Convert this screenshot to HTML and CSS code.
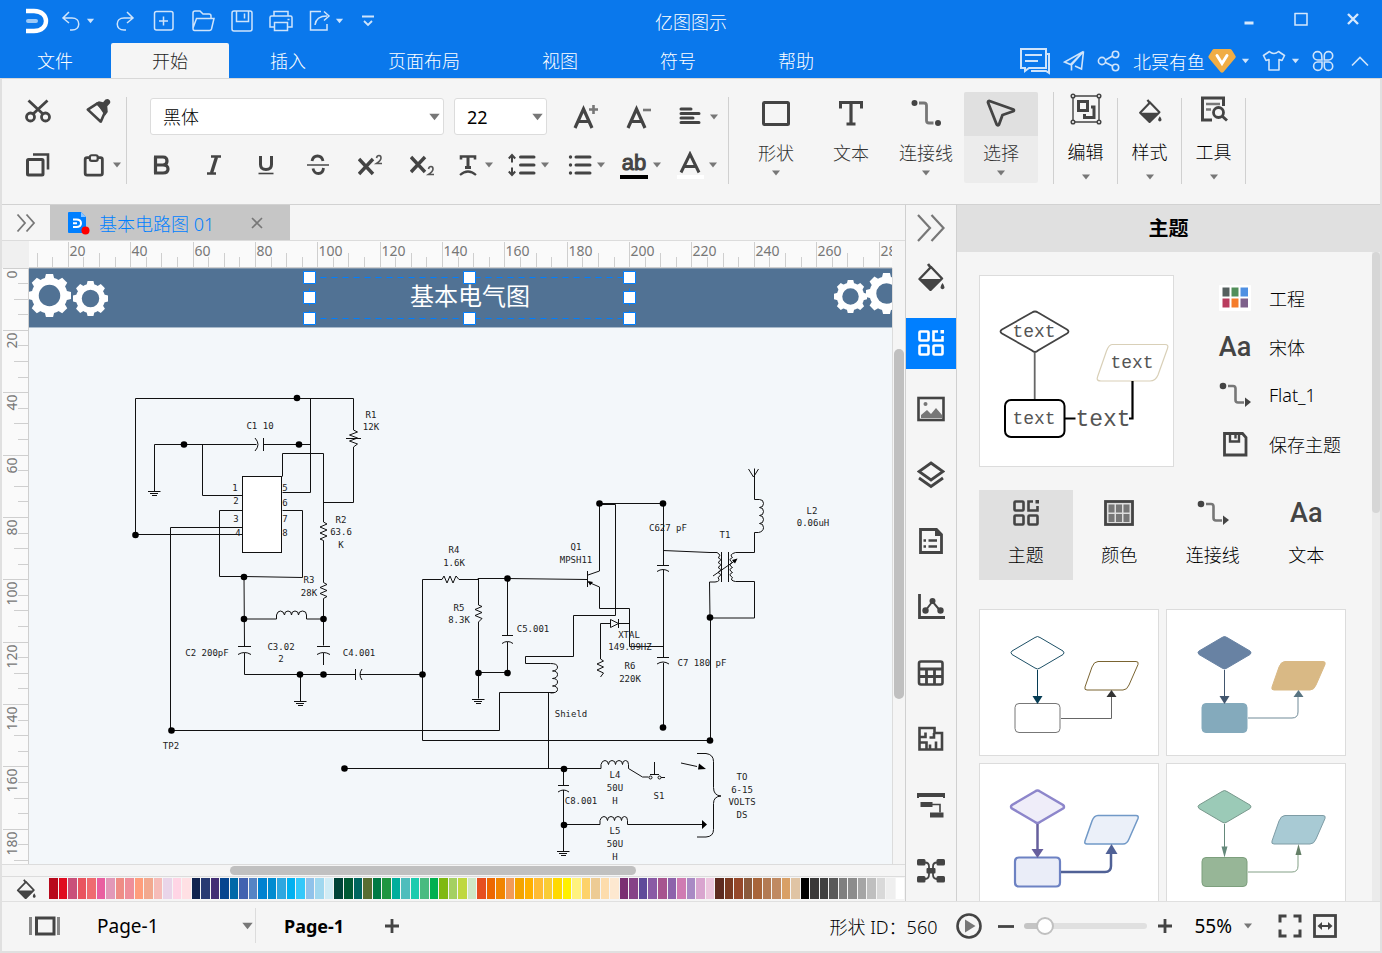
FILE: index.html
```html
<!DOCTYPE html>
<html lang="zh-CN">
<head>
<meta charset="utf-8">
<meta name="viewport" content="width=device-width, initial-scale=1">
<title>亿图图示</title>
<link rel="stylesheet" href="styles.css">
</head>
<body>
<svg class="defs" aria-hidden="true">
  <symbol id="caret" viewBox="0 0 10 6"><path d="M1 0.500h8L5 5.500z" fill="currentColor"/></symbol>
  <symbol id="bucket" viewBox="0 0 28 28"><path d="M11 1l3 4" stroke="currentColor" stroke-width="2.600" fill="none"/><path d="M14 4L2.500 16 13.500 27 25 15.500z" fill="none" stroke="currentColor" stroke-width="2.400" stroke-linejoin="round"/><path d="M2.500 16h22.500L13.500 27.500z" fill="currentColor"/><path d="M25.500 20q3 4 1.500 5.500t-3 0 1.500-5.500z" fill="currentColor"/></symbol>
  <symbol id="tiles" viewBox="0 0 26 26"><g fill="none" stroke="currentColor" stroke-width="2.600"><rect x="1.500" y="1.500" width="9" height="9" rx="1"/><path d="M20 1.500h-4.500v9h9V6"/><rect x="1.500" y="15.500" width="9" height="9" rx="1"/><rect x="15.500" y="15.500" width="9" height="9" rx="1"/></g><path d="M22.500 0H26v3.500h-3.500z" fill="currentColor"/></symbol>
  <symbol id="route" viewBox="0 0 32 26"><circle cx="4" cy="4" r="3.300" fill="#444"/><path d="M9 4h5q2.500 0 2.500 2.500v11.500q0 2.500 2.500 2.500h6" fill="none" stroke="#777" stroke-width="2.600"/><path d="M26 15.500l6 4.500-6 5z" fill="#444"/></symbol>
  <symbol id="gear" viewBox="-21 -21 42 42"><circle r="14" fill="none" stroke="#fff" stroke-width="7"/><g fill="#fff"><path id="tooth" d="M-5-15l1.500-6h7l1.500 6z"/><use href="#tooth" transform="rotate(45)"/><use href="#tooth" transform="rotate(90)"/><use href="#tooth" transform="rotate(135)"/><use href="#tooth" transform="rotate(180)"/><use href="#tooth" transform="rotate(225)"/><use href="#tooth" transform="rotate(270)"/><use href="#tooth" transform="rotate(315)"/></g></symbol>
</svg>

<div class="app">
<header class="top">
  <div class="titlebar">
    <div class="quick">
      <svg class="logo" viewBox="0 0 26 26"><path d="M2 3h8c16 0 16 20 0 20H2" fill="none" stroke="#fff" stroke-width="4.400"/><path d="M4 13h8" stroke="#9cc9f7" stroke-width="4" stroke-linecap="round"/></svg>
      <div class="quick-pair"><button class="qb" aria-label="撤销"><svg viewBox="0 0 24 24"><path d="M10 3L4 9l6 5M4 9h9c9 0 9 12 0 12h-2"/></svg></button><button class="qc" aria-label="撤销列表"><svg><use href="#caret"/></svg></button></div>
      <button class="qb" aria-label="重做"><svg viewBox="0 0 24 24"><path d="M14 3l6 6-6 5M20 9h-9c-9 0-9 12 0 12h2"/></svg></button>
      <button class="qb" aria-label="新建"><svg viewBox="0 0 24 24"><rect x="2.500" y="2.500" width="18.500" height="18.500" rx="2"/><path d="M11.500 7.500v9M7 12h9"/></svg></button>
      <button class="qb" aria-label="打开"><svg viewBox="0 0 24 24"><path d="M2 19V4q0-2 2-2h5l3 3h6q2 0 2 2v2M2 19L5.500 9.500H23L20.500 20q-.5 1.500-2 1.500H3.500Q2 21.500 2 19z"/></svg></button>
      <button class="qb" aria-label="保存"><svg viewBox="0 0 24 24"><path d="M4 2h16q2 0 2 2v16q0 2-2 2H4q-2 0-2-2V4q0-2 2-2zM6.500 2v10.500h12V2M14.500 4.500v5"/></svg></button>
      <button class="qb" aria-label="打印"><svg viewBox="0 0 24 24"><path d="M5 7V2.500h14V7M5 18H1V8.500Q1 7 2.500 7h19Q23 7 23 8.500V18h-4M5.500 13.500h13v8h-13zM18.500 10.500h2"/></svg></button>
      <div class="quick-pair"><button class="qb" aria-label="导出"><svg viewBox="0 0 24 24"><path d="M13 2.500H2.500v18.500H19v-6M7 16q1-9 12-9M16 2.500l5 4.500-5 4.500"/></svg></button><button class="qc" aria-label="导出列表"><svg><use href="#caret"/></svg></button></div>
      <button class="qm" aria-label="更多"><svg viewBox="0 0 12 12"><path d="M0 1.500h12M2 6l4 4 4-4"/></svg></button>
    </div>
    <h1>亿图图示</h1>
    <div class="winctl">
      <button aria-label="最小化"><svg viewBox="0 0 16 16"><path d="M3.500 12h9" stroke-width="3"/></svg></button>
      <button aria-label="最大化"><svg viewBox="0 0 16 16"><path d="M2 2v12h12V2M1.500 2.500h13"/></svg></button>
      <button aria-label="关闭"><svg viewBox="0 0 16 16"><path d="M3 3l10 10M13 3L3 13" stroke-width="2.400"/></svg></button>
    </div>
  </div>
  <div class="menubar">
    <nav class="tabs">
      <a href="#" class="first">文件</a><a href="#" class="on">开始</a><a href="#">插入</a><a href="#">页面布局</a><a href="#">视图</a><a href="#">符号</a><a href="#">帮助</a>
    </nav>
    <div class="account">
      <button aria-label="消息"><svg width="32" height="28" viewBox="0 0 32 28"><path d="M2 2h25v19H10l-4 3v-3H2zM27 7h3v19l-3-2H12M6 8h17M6 14h13" stroke-width="2"/></svg></button>
      <button aria-label="发送"><svg width="22" height="22" viewBox="0 0 22 22"><path d="M20.500 1.500L1.500 12l6 2.500zM20.500 1.500L8.500 15v5.500M20.500 1.500L18.500 19l-6.500-3"/></svg></button>
      <button aria-label="分享"><svg width="24" height="22" viewBox="0 0 24 22"><circle cx="5" cy="11" r="3.600"/><circle cx="18.500" cy="4.500" r="3.200"/><circle cx="18.500" cy="17.500" r="3.200"/><path d="M8.500 10l7-4M8.500 12.500l7 3.500"/></svg></button>
      <button class="user"><span>北冥有鱼</span><svg width="28" height="26" viewBox="0 0 28 26"><path d="M6 1h16q1 0 1.800 1L27.500 8q.6 1-.2 2L15.500 24q-1.500 1.500-3 0L.8 10Q0 9 .6 8L4.400 2Q5 1 6 1z" fill="#f0ad45" stroke="none"/><path d="M9 7.500l5 8 5-8" stroke="#fff" stroke-width="3" stroke-linecap="round"/></svg></button>
      <button class="ac" aria-label="账户"><svg><use href="#caret"/></svg></button>
      <button aria-label="皮肤"><svg width="24" height="22" viewBox="0 0 24 22"><path d="M7.500 1.500q4.500 4 9 0l6 4-2.500 5-3-1v10.500H7V9.500l-3 1L1.500 5.500z" stroke-linejoin="round"/></svg></button>
      <button class="ac" aria-label="皮肤列表"><svg><use href="#caret"/></svg></button>
      <button aria-label="应用"><svg width="22" height="22" viewBox="0 0 22 22"><path d="M10 10H5.500a4.200 4.200 0 1 1 4.200-4.200zM12.300 10V5.800A4.200 4.200 0 1 1 16.500 10zM10 12v4.200A4.200 4.200 0 1 1 5.500 12zM12.300 12h4.200a4.200 4.200 0 1 1-4.200 4.200z"/></svg></button>
      <button class="collapse" aria-label="折叠"><svg width="20" height="12" viewBox="0 0 20 12"><path d="M2 10.500l8-8 8 8"/></svg></button>
    </div>
  </div>
</header>

<section class="ribbon">
  <div class="clip">
    <div class="clip-row top-row">
      <button aria-label="剪切"><svg viewBox="0 0 26 26"><g fill="none" stroke="#444" stroke-width="2.800"><circle cx="5.500" cy="19" r="4"/><circle cx="20.500" cy="19" r="4"/><path d="M3.500 2.500L18 16M22.500 2.500L8 16"/></g></svg></button>
      <button aria-label="格式刷"><svg viewBox="0 0 28 28"><path d="M3 12.500L13 6l9 8-5 11.500z" fill="none" stroke="#444" stroke-width="2.800" stroke-linejoin="round"/><path d="M12 5l3-1.500 4.500 1L22 1.600q2.500-1.500 4.300.5t.2 4L24 9l.5 6-3 4z" fill="#444"/></svg></button>
    </div>
    <div class="clip-row">
      <button aria-label="复制"><svg viewBox="0 0 26 26"><g fill="none" stroke="#444"><rect x="2.500" y="7.500" width="15.500" height="15.500" rx="1" stroke-width="3"/><path d="M8 2.500h15v15" stroke-width="2.600"/></g></svg></button>
      <button aria-label="粘贴"><svg viewBox="0 0 28 28"><g fill="none" stroke="#444" stroke-width="3"><rect x="4.500" y="6" width="18.500" height="19" rx="2"/><rect x="9.500" y="3.500" width="8.500" height="6" rx="2" fill="#f5f5f5" stroke-width="2.400"/></g></svg></button>
      <button class="cb" aria-label="粘贴选项"><svg><use href="#caret"/></svg></button>
    </div>
  </div>
  <div class="font">
    <div class="row">
      <label class="pick face"><select aria-label="字体"><option>黑体</option></select><svg><use href="#caret"/></svg></label>
      <label class="pick size"><select aria-label="字号"><option>22</option></select><svg><use href="#caret"/></svg></label>
      <div class="rest">
        <button aria-label="增大"><svg width="26" height="26" viewBox="0 0 26 26"><path d="M2 24L10.500 5 19 24M5 17.500h11" fill="none" stroke="#444" stroke-width="3.200"/><path d="M20.500 1v9M16 5.500h9" stroke="#777" stroke-width="2.600"/></svg></button>
        <button aria-label="减小"><svg width="26" height="26" viewBox="0 0 26 26"><path d="M3 24L11.500 5 20 24M6 17.500h11" fill="none" stroke="#444" stroke-width="3.200"/><path d="M18 6H26" stroke="#777" stroke-width="2.600"/></svg></button>
        <div class="split"><button aria-label="对齐"><svg width="28" height="24" viewBox="0 0 28 24"><path d="M4 4h10M4 8.500h18M4 13h12M4 17.500h18" stroke="#444" stroke-width="3" stroke-linecap="round"/></svg></button><button class="cb" aria-label="对齐选项"><svg><use href="#caret"/></svg></button></div>
      </div>
    </div>
    <div class="row two">
      <div class="marks">
        <button aria-label="粗体"><svg viewBox="0 0 24 24"><path d="M5.500 4v16M4 4h9q4 0 4 4t-4 4H5.500M13 12q5 0 5 4t-5 4H4" fill="none" stroke="#444" stroke-width="3.200"/></svg></button>
        <button aria-label="斜体"><svg viewBox="0 0 24 24"><path d="M9 3.500h10M5 20.500h9" stroke="#444" stroke-width="2.600"/><path d="M14.500 4L9.500 20" stroke="#444" stroke-width="3.400"/></svg></button>
        <button aria-label="下划线"><svg viewBox="0 0 24 24"><path d="M6.500 3v8.500q0 5 5.500 5t5.500-5V3" fill="none" stroke="#444" stroke-width="3"/><path d="M4.500 20.500h15" stroke="#444" stroke-width="1.600"/></svg></button>
        <button aria-label="删除线"><svg viewBox="0 0 24 24"><path d="M17 8q-1-5-5.500-5T6 8M7 15.500q1 5 5.500 5t5-5.500" fill="none" stroke="#444" stroke-width="2.800"/><path d="M1 12h22" stroke="#666" stroke-width="1.800"/></svg></button>
        <button aria-label="上标"><svg viewBox="0 0 24 24"><path d="M1 6l14 15M15 6L1 21" stroke="#444" stroke-width="3.400"/><path d="M18.500 5q.5-2.500 2.500-2.500t2 2.500-4.500 5.500H24" fill="none" stroke="#555" stroke-width="1.600"/></svg></button>
        <button aria-label="下标"><svg viewBox="0 0 24 24"><path d="M1 4l14 15M15 4L1 19" stroke="#444" stroke-width="3.400"/><path d="M18.500 16q.5-2.500 2.500-2.500t2 2.500-4.500 5.500H24" fill="none" stroke="#555" stroke-width="1.600"/></svg></button>
      </div>
      <div class="splits">
        <div class="split"><button aria-label="文字方向"><svg width="24" height="24" viewBox="0 0 24 24"><path d="M5 6.500V3.500h14v3" fill="none" stroke="#444" stroke-width="2.600"/><path d="M12 3v12M9 14.500h6" stroke="#444" stroke-width="3"/><path d="M4 22q8-7 16 0" fill="none" stroke="#444" stroke-width="2.200"/></svg></button><button class="cb" aria-label="文字方向选项"><svg><use href="#caret"/></svg></button></div>
        <div class="split"><button aria-label="行距"><svg width="28" height="24" viewBox="0 0 28 24"><path d="M12.500 4H26M12.500 12H26M12.500 20H26" stroke="#444" stroke-width="3" stroke-linecap="round"/><path d="M4 3v6.500M4 14.500V21M.8 5.500L4 2l3.200 3.500M.8 18.500L4 22l3.200-3.500" fill="none" stroke="#444" stroke-width="2"/></svg></button><button class="cb" aria-label="行距选项"><svg><use href="#caret"/></svg></button></div>
        <div class="split"><button aria-label="列表"><svg width="28" height="24" viewBox="0 0 28 24"><path d="M12 4h14M12 12h14M12 20h14" stroke="#444" stroke-width="3" stroke-linecap="round"/><g fill="#444"><circle cx="6.500" cy="4" r="1.700"/><circle cx="6.500" cy="12" r="1.700"/><circle cx="6.500" cy="20" r="1.700"/></g></svg></button><button class="cb" aria-label="列表选项"><svg><use href="#caret"/></svg></button></div>
        <div class="split"><button class="ab" aria-label="高亮"><span>ab</span></button><button class="cb" aria-label="高亮选项"><svg><use href="#caret"/></svg></button></div>
        <div class="split"><button aria-label="字体颜色"><svg width="28" height="28" viewBox="0 0 28 28"><path d="M5 21.500L14 3l9 18.500M8 15.500h12" fill="none" stroke="#444" stroke-width="3"/><path d="M1 24h27v4H1z" fill="#fff"/></svg></button><button class="cb" aria-label="字体颜色选项"><svg><use href="#caret"/></svg></button></div>
      </div>
    </div>
  </div>
  <div class="tools">
    <button class="tool"><span class="ti"><svg width="30" height="28" viewBox="0 0 30 28"><rect x="2.500" y="2.500" width="25" height="22" rx="1" fill="none" stroke="#444" stroke-width="3"/></svg></span><b>形状</b><svg class="tc"><use href="#caret"/></svg></button>
    <button class="tool"><span class="ti"><svg width="28" height="28" viewBox="0 0 28 28"><path d="M3.500 8.500V2.500h21v6" fill="none" stroke="#444" stroke-width="3"/><path d="M14 2v22M9.500 24h9" stroke="#444" stroke-width="3.200"/></svg></span><b>文本</b></button>
    <button class="tool"><span class="ti"><svg width="30" height="28" viewBox="0 0 30 28"><g fill="#444"><circle cx="3.500" cy="3" r="3"/><circle cx="27" cy="23" r="3"/></g><path d="M8 3h5q2.500 0 2.500 2.500v15q0 2.500 2.500 2.500h4.500" fill="none" stroke="#777" stroke-width="2.800"/></svg></span><b>连接线</b><svg class="tc"><use href="#caret"/></svg></button>
    <button class="tool sel"><span class="ti"><svg width="30" height="30" viewBox="0 0 30 30"><path d="M3.500 2l24 8.500q1 1-.3 1.800L16.500 16l-3.500 9.500q-1.300 1.600-2.300 0L2 3.500Q2 2 3.500 2z" fill="none" stroke="#444" stroke-width="2.800" stroke-linejoin="round"/></svg></span><b>选择</b><svg class="tc"><use href="#caret"/></svg></button>
  </div>
  <div class="more">
    <button><svg width="32" height="32" viewBox="0 0 32 32"><g fill="none" stroke="#444"><path d="M3 3h26v26H3z" stroke-width="1.400"/><g fill="#f5f5f5" stroke-width="1.500"><circle cx="3" cy="3" r="1.800"/><circle cx="29" cy="3" r="1.800"/><circle cx="3" cy="29" r="1.800"/><circle cx="29" cy="29" r="1.800"/></g><rect x="8.500" y="8.500" width="9" height="9" stroke-width="3"/><path d="M21 14h3v10.500H14.500V21" stroke-width="3"/></g></svg><b>编辑</b><svg class="tc"><use href="#caret"/></svg></button>
    <button><svg width="24" height="24"><use href="#bucket"/></svg><b>样式</b><svg class="tc"><use href="#caret"/></svg></button>
    <button><svg width="28" height="28" viewBox="0 0 28 28"><path d="M23.500 11V3H2.500v22H12" fill="none" stroke="#444" stroke-width="3"/><path d="M6 9h14M6 14.500h5" stroke="#777" stroke-width="2.400"/><circle cx="18.500" cy="17.500" r="5" fill="none" stroke="#444" stroke-width="2.800"/><path d="M22 21l5 4.500" stroke="#444" stroke-width="3"/></svg><b>工具</b><svg class="tc"><use href="#caret"/></svg></button>
  </div>
</section>

<main class="work">
  <section class="editor">
    <div class="doctabs">
      <button class="expand" aria-label="展开符号库"><svg width="20" height="20" viewBox="0 0 20 20"><path d="M1.500 1.500L9 10l-7.500 8.500M10.500 1.500L18 10l-7.500 8.500" fill="none" stroke="#777" stroke-width="1.800"/></svg></button>
      <div class="doctab"><svg width="23" height="24" viewBox="0 0 23 24"><path d="M2 1h12l5 5v15q0 1-1 1H2q-1 0-1-1V2q0-1 1-1z" fill="#007fff"/><path d="M14 1l5 5h-5z" fill="#8cc5ff"/><path d="M6 8.500h3.500c6 0 6 7.500 0 7.500H6M6 12.300h4" fill="none" stroke="#fff" stroke-width="2"/><circle cx="18.500" cy="19.500" r="4" fill="#f00"/></svg><a href="#">基本电路图 01</a><button aria-label="关闭文档"><svg width="12" height="12" viewBox="0 0 12 12"><path d="M1 1l10 10M11 1L1 11" stroke="#777" stroke-width="1.600"/></svg></button></div>
    </div>
    <div class="stage">
      <div class="corner"></div>
      <svg class="ruler-x" id="rulerX"></svg>
      <div class="ruler-end"></div>
      <svg class="ruler-y" id="rulerY"></svg>
      <div class="canvas">
        <svg class="drawing" width="863" height="596" viewBox="29 268 863 596">
          <rect x="29" y="268" width="863" height="59" fill="#517294"/>
          <path d="M29 268.500h863" stroke="#8095ab"/><path d="M29 327.500h863" stroke="#a9bacb"/>
          <use href="#gear" x="28" y="274" width="43" height="43"/><use href="#gear" x="73" y="281" width="35" height="35"/>
          <use href="#gear" x="834" y="280" width="33" height="33"/><use href="#gear" x="866" y="273" width="41" height="41"/>
          <path d="M309.500 277.500h320M309.500 318.500h320M309.500 277.500v41M629.500 277.500v41" fill="none" stroke="#007fff" stroke-dasharray="6 5"/>
          <text class="head" x="470" y="305">基本电气图</text>
          <g fill="#fff" stroke="#007fff"><path d="M303.500 271.500h12v12h-12zM463.500 271.500h12v12h-12zM623.500 271.500h12v12h-12zM303.500 291.500h12v12h-12zM623.500 291.500h12v12h-12zM303.500 312.500h12v12h-12zM463.500 312.500h12v12h-12zM623.500 312.500h12v12h-12z"/></g>

          <g fill="none" stroke="#111" stroke-width="1">
            <path d="M135.500 534.500v-136h218v24M310.500 398.500v94h-28M154.500 491v-46.500h102M263.500 438v13M263.500 444.500h47M202.500 444.500v51h40M255 438q6 6.500 0 13"/>
            <rect x="242.500" y="476.500" width="39" height="76" fill="#fff"/>
            <path d="M282.500 476.500v-23h41v67M323.500 502.500h30V454M353.500 422v8l4 2-8 3 8 3-8 3 8 3-4 3v8M346 438.500h15"/>
            <path d="M323.500 520v2l3.500 2-7 3 7 3-7 3 7 3-7 3 3.500 1.500v42l3.500 2-7 3 7 3-7 3 7 3-3.500 2v47M317 646.500h13M317 654.500q6.500-4 13 0M323.500 653v12"/>
            <path d="M242.500 510.500h-23v66h24.500l58.500 1v-67h-20M242.500 527.500h-72v203h329v-38h55M135.500 534.500h107"/>
            <path d="M244 577l.5 69M238 646.500h13M238 654.500q6.500-4 13 0M244.500 653v21.500h111M244 619h32.500v-4q1-4 4-4t4 4q0-4 3.500-4t3.500 4q0-4 3.500-4t3.500 4q0-4 4-4t4 4v4h17"/>
            <path d="M355.500 669v11M362 669q-4 5.500 0 11M360 674.500h62M300.500 674v27"/>
            <path d="M442 579.500h-19.500v161h288M442 579.500l2-3.500 3 7 3-7 3 7 3-7 3 3.500h19v-1h29l80 1M478.500 579v26l3.500 1.500-7 3 7 3-7 3 7 3-3.500 3.500v51M478.500 672.500v26M478.500 672.500h29M507.500 578v57.500M502 635.500h11M502 643.500q5.500-4 11 0M507.500 642v31"/>
            <path d="M587.500 571v16M588 575l11.500-4v-67.500h64v62.500M588 582l11.500 5v21.500h30v38h34M600 504.500h15.500v111h-42v41h-48v7h25q7 0 7 3.500t-5 4q5 0 5 3.500t-5 4q5 0 5 3.500t-5 4q5 0 5 3.500t-7 3.500M548.500 692v76"/>
            <path d="M600.500 659v-35.500h10M610.500 619.500v8l8-4zM618.500 619v9M618.500 623.500h11M600.500 659l3 2-6.500 3 6.500 3-6.500 3 6.500 3-3 4"/>
            <path d="M657 565.500h12M657 571.500q6-4 12 0M663.500 570v87.500M657 657.500h12M657 664q6-4 12 0M663.500 663v64M663 550.500l47 2h7q5 3 1 5 5 2 0 5 5 2 0 5 5 2 0 5 5 2 0 5 3 4-3 4.500h-5.500l.5 36h44.500v-36.500h-19q-6-1-3-4-5-3 0-5-5-3 0-5-5-3 0-5-5-3 0-5-4-3 3-5h19v-20h4q5-1 5-5t-4-4q4 0 4-4t-4-4q4 0 4-4t-4-4q4 0 4-4t-4-4h-5v-31M753.500 477l-5-8M753.500 477l5-8M721.500 552v30M728.500 552v30M713 576l23-16M710.500 618v122"/>
            <path d="M344 768.500h257v-4q1-4 4-4t3.500 4q0-4 3.500-4t3.500 4q0-4 3.500-4t3.500 4q0-4 3-4t3 4v4l14 8.500h6M654.500 762v12M650 774.500h9M661 777.500h4M681 763l16 3.500M563.500 769v16M558 785.500h11M558 792q5.500-4 11 0M563.500 790v61M564 824.500h36v-4q1-4 4-4t3.500 4q0-4 3.500-4t3.500 4q0-4 3.500-4t3.500 4q0-4 3-4t3 4v4h76"/>
            <circle cx="650.500" cy="777.500" r="1.500"/><circle cx="659.500" cy="777.500" r="1.500"/>
            <path d="M697 753.500h9q7.500 1 7.500 8v26q0 8 7.500 8.500-7.500.5-7.500 7.500v26q0 7-7.500 7.500h-9"/>
            <path d="M148 491.500h12.500M150 493.500h8M152 495.500h5M294 701.500h12.500M296 703.500h8M298 705.500h5M472 699.500h12.500M474 701.500h8M476 703.500h5M557 851.500h12.500M559 853.500h8M561 855.500h5"/>
          </g>
          <g fill="#000"><circle cx="297" cy="398" r="3.300"/><circle cx="184" cy="444.500" r="3.300"/><circle cx="299" cy="444.500" r="3.300"/><circle cx="135.500" cy="535" r="3.300"/><circle cx="244" cy="577" r="3.300"/><circle cx="244" cy="619" r="3.300"/><circle cx="323.500" cy="619" r="3.300"/><circle cx="300" cy="674.500" r="3.300"/><circle cx="323.500" cy="674.500" r="3.300"/><circle cx="422.500" cy="674.500" r="3.300"/><circle cx="171.500" cy="730.500" r="3.300"/><circle cx="344.500" cy="768.500" r="3.300"/><circle cx="507.500" cy="578.500" r="3.300"/><circle cx="478.500" cy="673" r="3.300"/><circle cx="507.500" cy="673" r="3.300"/><circle cx="599.500" cy="503.500" r="3.300"/><circle cx="663" cy="503.500" r="3.300"/><circle cx="663" cy="727.500" r="3.300"/><circle cx="710" cy="617.500" r="3.300"/><circle cx="710" cy="740.500" r="3.300"/><circle cx="564" cy="769" r="3.300"/><circle cx="564" cy="825" r="3.300"/><path d="M707 824.500l-5-4.500v9zM706 769l-7-5.500-1 6zM737.500 558.500l-5.500 1.500 3 3.500zM588 581l5 1-3 3.500z"/></g>
          <g class="lab">
            <text x="260" y="429">C1 10</text><text x="371" y="418">R1</text><text x="371" y="430">12K</text>
            <text x="235" y="491">1</text><text x="236" y="504">2</text><text x="236" y="522">3</text><text x="238" y="536">4</text>
            <text x="285" y="491">5</text><text x="285" y="506">6</text><text x="285" y="522">7</text><text x="285" y="536">8</text>
            <text x="341" y="523">R2</text><text x="341" y="535">63.6</text><text x="341" y="548">K</text>
            <text x="309" y="583">R3</text><text x="309" y="596">28K</text><text x="207" y="656">C2 200pF</text>
            <text x="281" y="650">C3.02</text><text x="281" y="662">2</text><text x="359" y="656">C4.001</text><text x="171" y="749">TP2</text>
            <text x="454" y="553">R4</text><text x="454" y="566">1.6K</text><text x="459" y="611">R5</text><text x="459" y="623">8.3K</text>
            <text x="533" y="632">C5.001</text><text x="576" y="550">Q1</text><text x="576" y="563">MPSH11</text><text x="668" y="531">C627 pF</text>
            <text x="725" y="538">T1</text><text x="812" y="514">L2</text><text x="813" y="526">0.06uH</text>
            <text x="629" y="638">XTAL</text><text x="630" y="650">149.89HZ</text><text x="630" y="669">R6</text><text x="630" y="682">220K</text>
            <text x="702" y="666">C7 180 pF</text><text x="571" y="717">Shield</text>
            <text x="615" y="778">L4</text><text x="615" y="791">50U</text><text x="615" y="804">H</text><text x="659" y="799">S1</text><text x="581" y="804">C8.001</text>
            <text x="615" y="834">L5</text><text x="615" y="847">50U</text><text x="615" y="860">H</text>
            <text x="742" y="780">TO</text><text x="742" y="793">6-15</text><text x="742" y="805">VOLTS</text><text x="742" y="818">DS</text>
          </g>
        </svg>
      </div>
      <div class="vscroll"><i></i></div>
    </div>
    <div class="hscroll"><i></i></div>
    <div class="palette"><button aria-label="填充颜色"><svg width="20" height="20"><use href="#bucket"/></svg></button><div class="swatches" id="swatches"></div></div>
  </section>

  <aside class="rail">
    <button class="fold" aria-label="折叠面板"><svg width="28" height="28" viewBox="0 0 28 28"><path d="M1 1l12 13L1 27M14.500 1l12 13-12 13" fill="none" stroke="#777" stroke-width="2.200"/></svg></button>
    <button aria-label="填充"><svg><use href="#bucket"/></svg></button>
    <button class="on" aria-label="主题"><svg width="26" height="26"><use href="#tiles"/></svg></button>
    <button aria-label="图片"><svg viewBox="0 0 28 28"><rect x="1.500" y="3" width="25" height="22" fill="none" stroke="#444" stroke-width="2.600"/><path d="M4 23v-3l6-5 4 4 5-6 6 7v3z" fill="#777"/><circle cx="8.500" cy="9" r="2" fill="#777"/></svg></button>
    <button aria-label="图层"><svg viewBox="0 0 28 28"><path d="M14 2L26 10.500 14 19 2 10.500zM2 17l12 8.500L26 17" fill="none" stroke="#444" stroke-width="2.800"/></svg></button>
    <button aria-label="注释"><svg viewBox="0 0 28 28"><path d="M3.500 2.500h16l5 5v18h-21z" fill="none" stroke="#444" stroke-width="2.800"/><path d="M18 1.500V9h7z" fill="#444"/><path d="M11.500 13.500H20M11.500 19.500H20M6.500 13.500h2.500M6.500 19.500h2.500" stroke="#444" stroke-width="2.600"/></svg></button>
    <button aria-label="图表"><svg viewBox="0 0 28 28"><path d="M2.500 1v23.500H28" fill="none" stroke="#444" stroke-width="2.800"/><path d="M8.500 17.500l7-9 7.500 9" fill="none" stroke="#444" stroke-width="2"/><g fill="#444"><circle cx="15.500" cy="8" r="3"/><circle cx="8.500" cy="17.500" r="3.200"/><circle cx="23.500" cy="17.500" r="3.200"/></g></svg></button>
    <button aria-label="表格"><svg viewBox="0 0 28 28"><rect x="2" y="2.500" width="23.500" height="23" rx="2" fill="none" stroke="#444" stroke-width="2.600"/><path d="M2 10h24M2 17.500h24M9.500 10v15M17.500 10v15" stroke="#444" stroke-width="2.800"/></svg></button>
    <button aria-label="平面图"><svg viewBox="0 0 28 28"><path d="M2.500 3h15v5h7.500v16.500H2.500zM2.500 12h6V7.500M17 8v4.500h-4.500M2.500 17.500h7v7M19 24.500v-8M13 24.500v-5" fill="none" stroke="#444" stroke-width="2.600"/></svg></button>
    <button aria-label="容器"><svg viewBox="0 0 28 28"><path d="M0 7V2h28v5h-2V6H2v1zM3.500 11h12v5h-12zM13 21.500h13.500v5H13z" fill="#444"/><path d="M15 13.500h8v8" fill="none" stroke="#444" stroke-width="1.600"/></svg></button>
    <button aria-label="导图"><svg viewBox="0 0 28 28"><g fill="#444"><rect x="0" y="2" width="8.500" height="6.500" rx="1.500"/><rect x="19.500" y="2" width="8.500" height="6.500" rx="1.500"/><rect x="0" y="19" width="8.500" height="6.500" rx="1.500"/><rect x="19.500" y="19" width="8.500" height="6.500" rx="1.500"/><rect x="9.500" y="11" width="9" height="5.500" rx="1"/></g><path d="M8 5.500q4 0 4 4v8q0 4.500-4 4.500M20 5.500q-4 0-4 4v8q0 4.500 4 4.500" fill="none" stroke="#444" stroke-width="1.800"/></svg></button>
  </aside>

  <aside class="panel">
    <h2>主题</h2>
    <div class="panel-body">
      <div class="panel-content">
        <div class="current">
          <svg class="preview" width="193" height="190" viewBox="980 276 193 190">
            <path d="M1038 312.500L1067 329.500q3 2 0 4L1038 350.500q-3 3-6 0L1002 333.500q-3-2 0-4L1032 312.500q3-2 6 0z" fill="#fff" stroke="#444" stroke-width="1.800"/>
            <path d="M1034.700 353v46" stroke="#666" stroke-width="1.800"/>
            <rect x="1005" y="400" width="59.500" height="37" rx="6" fill="#fff" stroke="#000" stroke-width="2"/>
            <path d="M1112 344.500h53q4 0 2.500 4L1158 375q-2.500 6-8 6h-49q-5 0-3.500-4l9-26q2.500-6.500 5.500-6.500z" fill="#fff" stroke="#d9d0b8" stroke-width="1.200"/>
            <path d="M1065 418.500h10.500M1129 418.500h3.500V381" fill="none" stroke="#000" stroke-width="2.200"/>
            <g class="sample"><text x="1034" y="337">text</text><text x="1132" y="368">text</text><text x="1034" y="424">text</text><text class="big" x="1103" y="426">text</text></g>
          </svg>
          <div class="opts">
            <button><svg width="32" height="26" viewBox="0 0 32 26"><rect width="32" height="26" rx="1" fill="#fff"/><path d="M3.500 2.500h7v9h-7z" fill="#555f5e"/><path d="M12.500 2.500h7v9h-7z" fill="#528f5a"/><path d="M21.500 2.500h7.500v9h-7.500z" fill="#4f90e2"/><path d="M3.500 13.500h7v9h-7z" fill="#b93c5e"/><path d="M12.500 13.500h7v9h-7z" fill="#f57c2b"/><path d="M21.500 13.500h7.500v9h-7.500z" fill="#7e618b"/></svg>工程</button>
            <button><span class="aa" aria-hidden="true">Aa</span>宋体</button>
            <button><svg width="32" height="26"><use href="#route"/></svg>Flat_1</button>
            <button><svg width="32" height="26" viewBox="0 0 32 26"><path d="M5.500 2.500h18l3.500 4v17.500H5.500z" fill="none" stroke="#444" stroke-width="2.800"/><path d="M11 2v8.500h9V2M16.500 3v4.500" fill="none" stroke="#444" stroke-width="2.400"/></svg>保存主题</button>
          </div>
        </div>
        <div class="kinds">
          <button class="on"><svg width="26" height="26" class="gray"><use href="#tiles"/></svg>主题</button>
          <button><svg width="30" height="26" viewBox="0 0 30 26"><rect x="1.500" y="1.500" width="27" height="23" fill="#ddd" stroke="#444" stroke-width="2.800"/><path d="M4.500 4.500h6v8h-6zM12 4.500h6v8h-6zM19.500 4.500h6v8h-6zM4.500 14h6v8h-6zM12 14h6v8h-6zM19.500 14h6v8h-6z" fill="#777"/></svg>颜色</button>
          <button><svg width="32" height="26"><use href="#route"/></svg>连接线</button>
          <button><span class="aa" aria-hidden="true">Aa</span>文本</button>
        </div>
        <div class="thumbs" id="thumbs"></div>
      </div>
      <div class="pscroll"><i></i></div>
    </div>
  </aside>
</main>

<footer class="status">
  <button class="view" aria-label="页面视图"><svg width="34" height="22" viewBox="0 0 34 22"><rect x="8.500" y="3" width="17.500" height="16" fill="none" stroke="#444" stroke-width="3"/><path d="M2.500 2v18M30.500 2v18" stroke="#888" stroke-width="3"/></svg></button>
  <label class="pagepick"><select aria-label="页面"><option>Page-1</option></select><svg><use href="#caret"/></svg></label>
  <a href="#" class="pagetab">Page-1</a>
  <button aria-label="添加页面"><svg width="16" height="16" viewBox="0 0 16 16"><path d="M8 1v14M1 8h14" stroke="#444" stroke-width="2.800"/></svg></button>
  <div class="zoom">
    <span>形状 ID：560</span>
    <button aria-label="播放"><svg width="26" height="26" viewBox="0 0 26 26"><circle cx="13" cy="13" r="11.500" fill="none" stroke="#444" stroke-width="2.600"/><path d="M9 6.500l10.500 6.500L9 19.500z" fill="#777"/></svg></button>
    <button aria-label="缩小"><svg width="16" height="16" viewBox="0 0 16 16"><path d="M0 8.500h16" stroke="#444" stroke-width="2.800"/></svg></button>
    <input type="range" aria-label="缩放" min="0" max="100" value="11">
    <button aria-label="放大"><svg width="16" height="16" viewBox="0 0 16 16"><path d="M8 1v14M1 8h14" stroke="#444" stroke-width="2.800"/></svg></button>
    <button class="pct">55%<svg><use href="#caret"/></svg></button>
    <button aria-label="全屏"><svg width="24" height="24" viewBox="0 0 24 24"><path d="M2 8.500V2h6.500M15.500 2H22v6.500M22 15.500V22h-6.500M8.500 22H2v-6.500" fill="none" stroke="#444" stroke-width="3"/></svg></button>
    <button aria-label="适应宽度"><svg width="24" height="24" viewBox="0 0 24 24"><rect x="1.500" y="1.500" width="21" height="21" fill="none" stroke="#444" stroke-width="2.800"/><path d="M7 12h10" stroke="#444" stroke-width="2"/><path d="M4.500 12L9 8v8zM19.500 12L15 8v8z" fill="#444"/></svg></button>
  </div>
</footer>
</div>
<script src="app.js"></script>
</body>
</html>
```
FILE: styles.css
```css
*{box-sizing:border-box}
body{margin:0;font-family:"Noto Sans","Noto Sans CJK SC",sans-serif;font-size:18px;color:#000;background:#e0e0e0}
button{appearance:none;border:0;background:none;padding:0;margin:0;font:inherit;color:inherit;display:flex;align-items:center;justify-content:center}
a{color:inherit;text-decoration:none}
svg{display:block;flex:none}
.defs{position:absolute;width:0;height:0}
.gray{color:#444}
.app{display:flex;flex-direction:column;height:100vh;min-height:600px}

.top{background:#0a78ec;color:#fff}
.titlebar{height:43px;display:grid;grid-template-columns:1fr auto 1fr;align-items:center}
.titlebar h1{margin:0;font-size:18px;font-weight:300;line-height:24px}
.quick{display:flex;align-items:center;gap:15px;padding:0 0 2px 24px}
.logo{width:26px;height:26px;margin-right:-6px}
.quick-pair{display:flex}
.qb svg{width:24px;height:24px;fill:none;stroke:#cfe4fb;stroke-width:1.500}
.qc{width:15px}
.qc svg,.ac svg{width:9px;height:6px;color:#cfe4fb}
.qm svg{width:12px;height:12px;fill:none;stroke:#cfe4fb;stroke-width:1.800}
.winctl{display:flex;justify-content:flex-end;gap:36px;padding-right:21px;padding-bottom:6px}
.winctl svg{width:16px;height:16px;fill:none;stroke:#d6e8fc;stroke-width:1.500}
.menubar{display:flex;height:35px;justify-content:space-between}
.tabs{display:flex}
.tabs a{padding:0 41px;line-height:36px;font-weight:300}
.tabs .first{padding:0 38px 0 37px}
.tabs .on{background:#f5f5f5;color:#222;border-radius:2px 2px 0 0}
.account{display:flex;align-items:center;padding-right:12px;gap:12px}
.account button>svg{fill:none;stroke:#cfe4fb;stroke-width:1.600}
.account .user{gap:3px;font-weight:300}
.account .ac{width:10px;margin-left:-8px}
.account .ac svg{stroke:none}
.account .collapse{margin-left:4px}

.ribbon{display:flex;background:#f5f5f5;height:126px;border:1px solid #d8d8d8;border-width:1px 2px 0;border-color:#d8d8d8 #e0e0e0;flex:none}
.ribbon svg use{color:#777}
.clip{display:flex;flex-direction:column;gap:26px;padding:18px 0 0 23px;height:105px;width:125px;border-right:1px solid #d0d0d0;clip-path:inset(18px 0 0 0)}
.clip-row{display:flex;height:28px;align-items:center;gap:30px}
.clip-row.top-row{gap:34px}
.clip svg{width:26px;height:26px}
.clip .cb{margin-left:-25px;width:10px}
.ribbon .cb svg{width:10px;height:6px}
.font{padding:19px 9px 0 23px;height:105px;border-right:1px solid #d0d0d0;clip-path:inset(18px 0 0 0)}
.row{display:flex;align-items:center}
.row.two{gap:22px;margin-top:16px;height:28px}
.pick{display:grid;align-items:center;background:#fff;border:1px solid #dcdcdc;border-radius:3px;height:37px}
.pick>*,.pagepick>*{grid-area:1/1}
.pick select,.pagepick select{appearance:none;border:0;background:transparent;font:inherit;color:#000;width:100%;height:35px;padding:0 12px;outline:0}
.pick svg{width:13px;height:8px;justify-self:end;margin-right:2px}
.face{width:294px;margin-right:10px;font-weight:300}
.size{width:93px;margin-right:26px}
.rest{display:flex;gap:26px;align-items:center}
.split{display:flex;align-items:center;gap:4px}
.cb{width:10px;height:20px}
.marks{display:flex;gap:28px}
.marks svg{width:24px;height:24px}
.splits{display:flex;gap:14px}
.ab{width:28px;height:28px;align-items:flex-start;border-bottom:4px solid #000;color:#444;font-family:"Liberation Sans",sans-serif;font-size:22px;line-height:24px;-webkit-text-stroke:1px #444}
.tools{display:flex;gap:1px;padding:13px 15px 0 10px;height:105px;border-right:1px solid #d0d0d0;clip-path:inset(13px 0 0 0)}
.tool{width:74px;height:91px;flex-direction:column;justify-content:flex-start;color:#333;border-radius:2px;overflow:hidden}
.tool b,.more b{font-weight:300;line-height:24px}
.ti{height:44px;width:100%;display:flex;align-items:center;justify-content:center}
.tool b{margin-top:5px}
.tc{width:10px;height:6px;margin-top:5px}
.sel{background:#ececec}
.sel .ti{background:#e0e0e0}
.more{display:flex;padding-top:19px}
.more button{width:64px;height:86px;border-right:1px solid #d0d0d0;flex-direction:column;justify-content:flex-end;padding-bottom:4px}
.more button>svg:first-child{margin-bottom:15px}
.more button>svg:first-child use{color:#444}
.more .tc{margin-top:10px}
.more button:nth-child(n+2)>svg:first-child{margin-bottom:17px}

.work{flex:1;min-height:0;display:flex;background:#f5f5f5;border:solid #e0e0e0;border-width:0 2px}
.editor{flex:1;min-width:0;display:flex;flex-direction:column;border-top:1px solid #d2d2d2;border-right:1px solid #d0d0d0}
.doctabs{display:flex;height:36px;flex:none;border-bottom:1px solid #dcdcdc}
.expand{width:48px}
.doctab{display:flex;align-items:center;width:240px;background:#c6c6c6;padding:0 27px 0 17px;color:#007fff;font-weight:300}
.doctab a{margin-left:9px;flex:1}
.stage{flex:1;min-height:0;display:grid;grid-template-columns:27px minmax(0,1fr) 13px;grid-template-rows:27px minmax(0,1fr);overflow:hidden}
.corner{background:#f0f0f0}
.ruler-x,.ruler-y{width:100%;height:100%;background:#fafafa;overflow:hidden;font-size:14px}
.ruler-x text,.ruler-y text{fill:#777}
.ruler-x path,.ruler-y path{stroke:#cfcfcf;fill:none}
.ruler-end{background:#f5f5f5}
.canvas{background:#f3f7fa;overflow:hidden;min-height:0}
.head{font-size:24px;fill:#fff;text-anchor:middle;font-family:"Noto Sans CJK SC",sans-serif}
.lab{font:9px "DejaVu Sans Mono",monospace;text-anchor:middle;fill:#222}
.vscroll{border-left:1px solid #dcdcdc;padding:81px 1px 0 1px}
.vscroll i{display:block;height:350px;border-radius:5px;background:#c0c0c0}
.hscroll{height:13px;flex:none;border-top:1px solid #dcdcdc;border-bottom:1px solid #dcdcdc;padding:1px 269px 1px 228px}
.hscroll i{display:block;height:9px;border-radius:5px;background:#c0c0c0}
.palette{display:flex;align-items:flex-start;padding-top:1px;height:24px;flex:none}
.palette button{width:47px;height:22px;color:#444}
.swatches{display:flex;flex:1;gap:1px;height:21px}
.swatches i{flex:1}

.rail{width:51px;border-top:1px solid #d2d2d2;border-right:1px solid #d0d0d0;display:flex;flex-direction:column;gap:15px;color:#444;overflow:hidden}
.rail button{height:51px;flex:none;padding-bottom:2px}
.rail .fold{height:47px;margin-bottom:-15px}
.rail svg{width:28px;height:28px}
.rail .on{background:#007fff;color:#fff}
.rail .on svg{width:26px;height:26px}

.panel{width:423px;display:flex;flex-direction:column;border-top:1px solid #d2d2d2}
.panel h2{margin:0;height:47px;flex:none;background:#e0e0e0;text-align:center;font-size:20px;line-height:47px;font-weight:700}
.panel-body{flex:1;min-height:0;display:flex;overflow:hidden}
.panel-content{flex:1;padding:23px 26px 0 22px;overflow:hidden}
.pscroll{width:8px;background:#ebebeb}
.pscroll i{display:block;height:261px;border-radius:4px;background:#d6d6d6}
.current{display:flex;gap:45px}
.preview{border:1px solid #dcdcdc;background:#fff;width:195px;height:192px}
.sample{font:18px "Liberation Mono",monospace;text-anchor:middle;fill:#555}
.big{font-size:23px}
.opts{display:flex;flex-direction:column;justify-content:space-between;padding:10px 0}
.opts button{height:26px;gap:18px;justify-content:flex-start;font-weight:300}
.aa{font:500 27px/26px Roboto,sans-serif;color:#444;width:32px;height:26px;display:flex;justify-content:center}
.kinds{display:grid;grid-template-columns:repeat(4,1fr);margin-top:23px;margin-right:-7px}
.kinds button{height:90px;flex-direction:column;gap:16px;font-weight:300;line-height:26px;padding-bottom:2px}
.kinds .on{background:#e0e0e0}
.kinds svg{height:26px}
.thumbs{display:grid;grid-template-columns:1fr 1fr;gap:7px;margin-top:29px;padding-right:1px}
.thumbs a{border:1px solid #dcdcdc;background:#fff;height:147px;display:flex;justify-content:flex-start}

.status{display:flex;align-items:center;height:52px;flex:none;background:#f5f5f5;border:solid #e0e0e0;border-width:1px 2px 2px;padding:0 43px 2px 26px}
.view{margin-right:23px}
.pagepick{display:grid;align-items:center;width:171px;border-right:1px solid #dcdcdc;margin-right:28px;font-size:19px}
.pagepick svg{width:13px;height:8px;justify-self:end;margin-right:1px;color:#777}
.pagetab{font-weight:700;margin-right:40px}
.zoom{display:flex;align-items:center;margin-left:auto}
.zoom span{margin-right:19px;font-weight:300}
.zoom button{margin-right:16px}
.zoom input{appearance:none;width:123px;height:20px;background:none;margin:0 10px 0 -6px}
.zoom input+button{margin-right:21px}
.zoom input::-webkit-slider-runnable-track{height:6px;border-radius:3px;background:linear-gradient(90deg,#c4c4c4 16%,#e0e0e0 16%)}
.zoom input::-webkit-slider-thumb{appearance:none;width:18px;height:18px;border-radius:50%;background:#fff;border:2px solid #c0c0c0;margin-top:-6px}
.zoom .pct{gap:11px;margin-right:25px;font-size:19px}
.pct svg{width:10px;height:6px;color:#777}
.zoom button:nth-last-child(2){margin-right:11px}
.zoom button:last-child{margin-right:0}
```
FILE: app.js
```js
const SCALE = 3.118;
const NS = "http://www.w3.org/2000/svg";

function add(parent, tag, attrs, text) {
  const el = document.createElementNS(NS, tag);
  for (const key in attrs) el.setAttribute(key, attrs[key]);
  if (text !== undefined) el.textContent = text;
  parent.appendChild(el);
}

function drawRuler(svg, origin, vertical) {
  const length = vertical ? svg.clientHeight : svg.clientWidth;
  for (let v = 0; origin + v * SCALE < length; v += 5) {
    const p = Math.floor(origin + v * SCALE) + 0.5;
    if (p < 0) continue;
    const major = v % 20 === 0;
    const size = major ? 26 : v % 10 === 0 ? 15 : 11;
    add(svg, "path", { d: vertical ? `M27 ${p}h${-size}` : `M${p} 27v${-size}` });
    if (!major) continue;
    add(svg, "text", vertical
      ? { transform: `translate(15 ${p + 2}) rotate(-90)`, "text-anchor": "end" }
      : { x: p + 1, y: 15 }, v);
  }
  add(svg, "path", { d: vertical ? `M26.5 0v${length}` : `M0 26.5h${length}` });
}
drawRuler(document.getElementById("rulerX"), -23, false);
drawRuler(document.getElementById("rulerY"), 0, true);

const colors = `b8091c e00b20 c9507a e9545f ef6b70 e95fa0 e298b8 ef8d86 ef8f9a ff9e7c f2a98f f6bcb8 e9d5e9 ffd5e5 ffe0e4
11234f 283a72 422d74 06448f 0068a8 4162b0 5584c4 0082d0 008bd0 2ea7e0 00b0f0 34c8fa 90c2ea a0d8ef d0ecf5
004438 005a34 006660 596d32 007a44 1f9640 00ae9c 4fbdbc 1ccbae 48bb80 00b050 7fb911 a4d062 bfd83f cfe7c6
e64f20 ed6800 f18500 f29b57 f4a400 ffb000 ffbc34 f9cc36 ffd900 fff000 fff27e fdd269 edcb94 fddcac fde8d0
7b2f72 864287 5f4a9a 8a5aa5 a7548f 8d63ab cf7bb2 a98ac4 d9a5cf ecc7de 5e2b20 7a3a22 96482a 8b5a3c a8653a b37b54 c08a62 d9a066 e0c4a4
000000 3a3838 404040 595959 7f7f7f 8c8c8c a5a5a5 bfbfbf d9d9d9 efefef ffffff`.split(/\s+/);
const swatches = document.getElementById("swatches");
for (const color of colors) {
  const cell = document.createElement("i");
  cell.style.background = "#" + color;
  swatches.appendChild(cell);
}

const themes = [
  { d: ["#fff", "#1d5066"], b: ["#fff", "#777"], p: ["#fff", "#7a6431"], a: "#063d55", c: "#333", l: "#666", w: 1, r: 0 },
  { d: ["#6882a3", "#6882a3"], b: ["#84aabc", "#84aabc"], p: ["#d9b985", "#d9b985"], a: "#42566e", c: "#587482", l: "#718b98", w: 1, r: 6 },
  { d: ["#efedf9", "#8d86cb"], b: ["#eaedf8", "#6d82c3"], p: ["#ebf0f9", "#7199c7"], a: "#665f9d", c: "#506196", l: "#506196", w: 2.5, r: 6 },
  { d: ["#9bcab7", "#79998d"], b: ["#97b697", "#7d9f7d"], p: ["#a8cad4", "#7e9ca5"], a: "#65897b", c: "#647f67", l: "#83a086", w: 1, r: 6 }
];
const holder = document.getElementById("thumbs");
themes.forEach((t, i) => {
  const link = document.createElement("a");
  link.href = "#";
  link.setAttribute("aria-label", "主题 " + (i + 1));
  const svg = document.createElementNS(NS, "svg");
  svg.setAttribute("width", 178);
  svg.setAttribute("height", 145);
  const shape = (d, s, w) => add(svg, "path", { d, fill: s[0], stroke: s[1], "stroke-width": w });
  shape("M60 27.500L83 41q2 2 0 3.500L60 58q-2.500 2-5 0L32 44.500q-2-2 0-3.500L55 27.500q2.500-2 5 0z", t.d, t.w);
  shape("M118 51.500h38q3 0 2 3L149 75q-2 5-6 5h-36q-3 0-2-3l7-20q2-5.500 6-5.500z", t.p, Math.min(t.w, 1.5));
  shape("M39 93.500h37q4 0 4 4v21q0 4-4 4H39q-4 0-4-4v-21q0-4 4-4z", t.b, t.w * 0.8 + 0.2);
  shape("M57.500 60v29", ["none", t.a], t.w);
  shape(t.r ? "M81 108h44q6 0 6-6V86" : "M81 108.500h50.500V86", ["none", t.l], t.w);
  add(svg, "path", { d: i === 3 ? "M57.500 93.500l-3-11h6z" : i === 2 ? "M57.500 94l-6-9h12z" : "M57.500 94l-5-8h10z", fill: t.a });
  add(svg, "path", { d: i === 3 ? "M131.500 80l-3 11h6z" : i === 2 ? "M131.500 80l-6 10h12z" : "M131.500 80l-5 7h10z", fill: t.c });
  link.appendChild(svg);
  holder.appendChild(link);
});
```
